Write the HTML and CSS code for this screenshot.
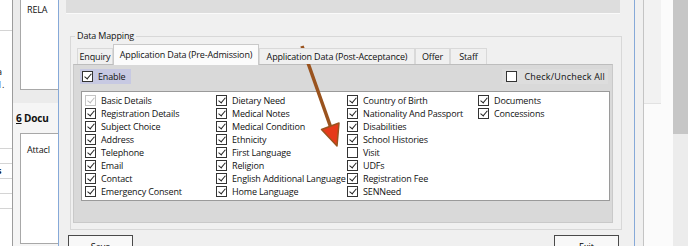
FILE: index.html
```html
<!DOCTYPE html>
<html lang="en">
<head>
    <meta charset="UTF-8">
    <title>Data Mapping</title>
    <link rel="stylesheet" href="styles.css">
</head>
<body>

<!-- Grid of the window behind, cut at the left -->
<div class="edge">
    <div class="edge-row first"></div>
    <div class="edge-row tall"><span class="frag">a</span><span class="frag">1.</span></div>
    <div class="edge-row"></div>
    <div class="edge-row"><b class="frag">s</b></div>
    <div class="edge-row"></div>
    <div class="edge-row"></div>
</div>

<div class="side">
    <div class="side-top">
        <div class="side-box">RELA</div>
    </div>
    <div class="side-title"><u>6</u> Docu</div>
    <div class="side-box lower">Attacl</div>
</div>

<!-- Dialog -->
<div class="dialog">
    <div class="top-bar"></div>

    <div class="group">
        <div class="group-title">Data Mapping</div>

        <div class="tabs">
            <div class="tab t-enquiry">Enquiry</div>
            <div class="tab t-pre selected">Application Data (Pre-Admission)</div>
            <div class="tab t-post">Application Data (Post-Acceptance)</div>
            <div class="tab t-offer">Offer</div>
            <div class="tab t-staff">Staff</div>
        </div>

        <div class="tab-page">
            <div class="toolbar">
                <label class="check enable"><span class="box on"></span>Enable</label>
                <label class="check all"><span class="box"></span>Check/Uncheck All</label>
            </div>

            <div class="list">
                <div class="item"><span class="box on off"></span>Basic Details</div>
                <div class="item"><span class="box on"></span>Registration Details</div>
                <div class="item"><span class="box on"></span>Subject Choice</div>
                <div class="item"><span class="box on"></span>Address</div>
                <div class="item"><span class="box on"></span>Telephone</div>
                <div class="item"><span class="box on"></span>Email</div>
                <div class="item"><span class="box on"></span>Contact</div>
                <div class="item"><span class="box on"></span>Emergency Consent</div>

                <div class="item"><span class="box on"></span>Dietary Need</div>
                <div class="item"><span class="box on"></span>Medical Notes</div>
                <div class="item"><span class="box on"></span>Medical Condition</div>
                <div class="item"><span class="box on"></span>Ethnicity</div>
                <div class="item"><span class="box on"></span>First Language</div>
                <div class="item"><span class="box on"></span>Religion</div>
                <div class="item"><span class="box on"></span>English Additional Language</div>
                <div class="item"><span class="box on"></span>Home Language</div>

                <div class="item"><span class="box on"></span>Country of Birth</div>
                <div class="item"><span class="box on"></span>Nationality And Passport</div>
                <div class="item"><span class="box on"></span>Disabilities</div>
                <div class="item"><span class="box on"></span>School Histories</div>
                <div class="item"><span class="box"></span>Visit</div>
                <div class="item"><span class="box on"></span>UDFs</div>
                <div class="item"><span class="box on"></span>Registration Fee</div>
                <div class="item"><span class="box on"></span>SENNeed</div>

                <div class="item"><span class="box on"></span>Documents</div>
                <div class="item"><span class="box on"></span>Concessions</div>
            </div>
        </div>
    </div>

    <div class="buttons">
        <button class="button">Save</button>
        <button class="button">Exit</button>
    </div>
</div>

<div class="gap"></div>
<div class="pane"><div class="pane-top"></div></div>
<div class="scroll"><div class="thumb"></div></div>

<!-- Annotation arrow drawn over the screenshot -->
<svg class="arrow" width="688" height="246" viewBox="0 0 688 246">
    <line x1="302" y1="46" x2="331" y2="128" stroke="#9a531e" stroke-width="3.5"/>
    <polygon points="321.5,129.5 339,123 337,146" fill="#e63a1a" stroke="#9a531e" stroke-width="1.5" stroke-linejoin="round"/>
</svg>

</body>
</html>
```

FILE: styles.css
```css
/* Page */
body {
    margin: 0;
    width: 688px;
    height: 246px;
    overflow: hidden;
    display: flex;
    background-color: #f0f0f0;
    font-family: "Open Sans", "Noto Sans", sans-serif;
    font-size: 9px;
    letter-spacing: -0.15px;
    color: #111;
    position: relative;
}
/* Window behind, left side */
.edge {
    width: 12px;
    background-color: #fff;
    border-right: 1px solid #9c9c9c;
    overflow: hidden;
}
.edge-row {
    height: 14px;
    border-bottom: 1px solid #d4d4d4;
}
.edge-row.first {
    height: 30px;
}
.edge-row.tall {
    height: 118px;
    padding-top: 34px;
    box-sizing: border-box;
}
.frag {
    display: block;
    line-height: 13px;
    margin-left: -3px;
}
.side {
    width: 45px;
    background-color: #f5f5f5;
    overflow: hidden;
}
.side-top {
    height: 103px;
    background-color: #ebebeb;
    padding-left: 7px;
}
.side-box {
    height: 90px;
    background-color: #fff;
    border-left: 1px solid #a8a8a8;
    border-bottom: 1px solid #a8a8a8;
    padding: 3px 0 0 6px;
    box-sizing: border-box;
    white-space: nowrap;
}
.side-box.lower {
    height: 111px;
    margin-left: 7px;
    border-top: 1px solid #a8a8a8;
    padding-top: 9px;
}
.side-title {
    font-weight: bold;
    font-size: 10px;
    margin: 8px 0 8px 3px;
    white-space: nowrap;
}
/* Dialog */
.dialog {
    width: 575px;
    border-left: 1px solid #86a9d8;
    border-right: 1px solid #86a9d8;
    background-color: #f0f0f0;
}
.top-bar {
    width: 554px;
    height: 13px;
    margin-left: 7px;
    background-color: #dddddd;
    border-bottom: 1px solid #fafafa;
}
.group {
    width: 550px;
    height: 192px;
    margin: 22px 0 0 11px;
    border: 1px solid #d8d8d8;
}
.group-title {
    width: max-content;
    margin: -7px 0 0 4px;
    padding: 0 2px;
    line-height: 12px;
    background-color: #f0f0f0;
}
/* Tabs */
.tabs {
    display: flex;
    align-items: flex-end;
    height: 20px;
    margin: 2px 0 0 6px;
    position: relative;
    z-index: 1;
}
.tab {
    height: 16px;
    line-height: 16px;
    box-sizing: border-box;
    text-align: center;
    background-color: #f0f0f0;
    border: 1px solid #d9d9d9;
    border-bottom: none;
    white-space: nowrap;
}
.tab.selected {
    height: 21px;
    line-height: 20px;
    margin-bottom: -1px;
    background-color: #fbfbfb;
    border-color: #c9c9c9;
}
.t-enquiry { width: 36px; }
.t-pre { width: 146px; }
.t-post { width: 156px; }
.t-offer { width: 35px; }
.t-staff { width: 37px; }
.tab-page {
    width: 538px;
    height: 157px;
    margin-left: 2px;
    background-color: #d9d9d9;
    border: 1px solid #c9c9c9;
    border-top-color: #bdbdbd;
}
.toolbar {
    display: flex;
    justify-content: space-between;
    align-items: center;
    height: 15px;
    margin: 4px 4px 0 6px;
}
/* Check boxes */
.check {
    display: flex;
    align-items: center;
    height: 15px;
}
.enable {
    width: 49px;
    padding-left: 2px;
    background-color: #c7c9e2;
}
.all {
    padding: 0 3px 0 4px;
    background-color: #dddddd;
    letter-spacing: 0.2px;
}
.all .box {
    margin-right: 7px;
}
.box {
    flex: none;
    position: relative;
    width: 9px;
    height: 9px;
    margin-right: 5px;
    background-color: #fff;
    border: 1px solid #333;
}
.box.on::after {
    content: "";
    position: absolute;
    left: 2.5px;
    top: 0;
    width: 3px;
    height: 6px;
    border-right: 1.2px solid #222;
    border-bottom: 1.2px solid #222;
    transform: rotate(40deg);
}
.box.off {
    border-color: #c4c4c4;
}
.box.off::after {
    border-color: #bdbdbd;
}
.list {
    height: 110px;
    margin: 7px 2px 0 7px;
    padding: 2px 0 0 3px;
    box-sizing: border-box;
    background-color: #fff;
    border: 1px solid #9a9a9a;
    display: grid;
    grid-template-rows: repeat(8, 13px);
    grid-auto-flow: column;
    grid-auto-columns: 131px;
}
.item {
    display: flex;
    align-items: center;
    white-space: nowrap;
    overflow: hidden;
    line-height: 13px;
}
/* Buttons */
.buttons {
    display: flex;
    justify-content: space-between;
    width: 551px;
    margin: 5px 0 0 9px;
}
.button {
    width: 65px;
    height: 23px;
    padding: 0;
    font-family: inherit;
    font-size: 9px;
    background-color: #f8f8f8;
    border: 1px solid #4a4a4a;
}
/* Right side */
.gap {
    width: 8px;
    border-right: 1px solid #c4c4c4;
}
.pane {
    width: 29px;
    background-color: #fbfbfb;
}
.pane-top {
    width: 17px;
    height: 103px;
    background-color: #f2f2f2;
    border-bottom: 1px solid #e2e2e2;
}
.scroll {
    width: 15px;
    background-color: #ececec;
}
.thumb {
    height: 134px;
    background-color: #c6c6c6;
}
.arrow {
    position: absolute;
    left: 0;
    top: 0;
}
```
